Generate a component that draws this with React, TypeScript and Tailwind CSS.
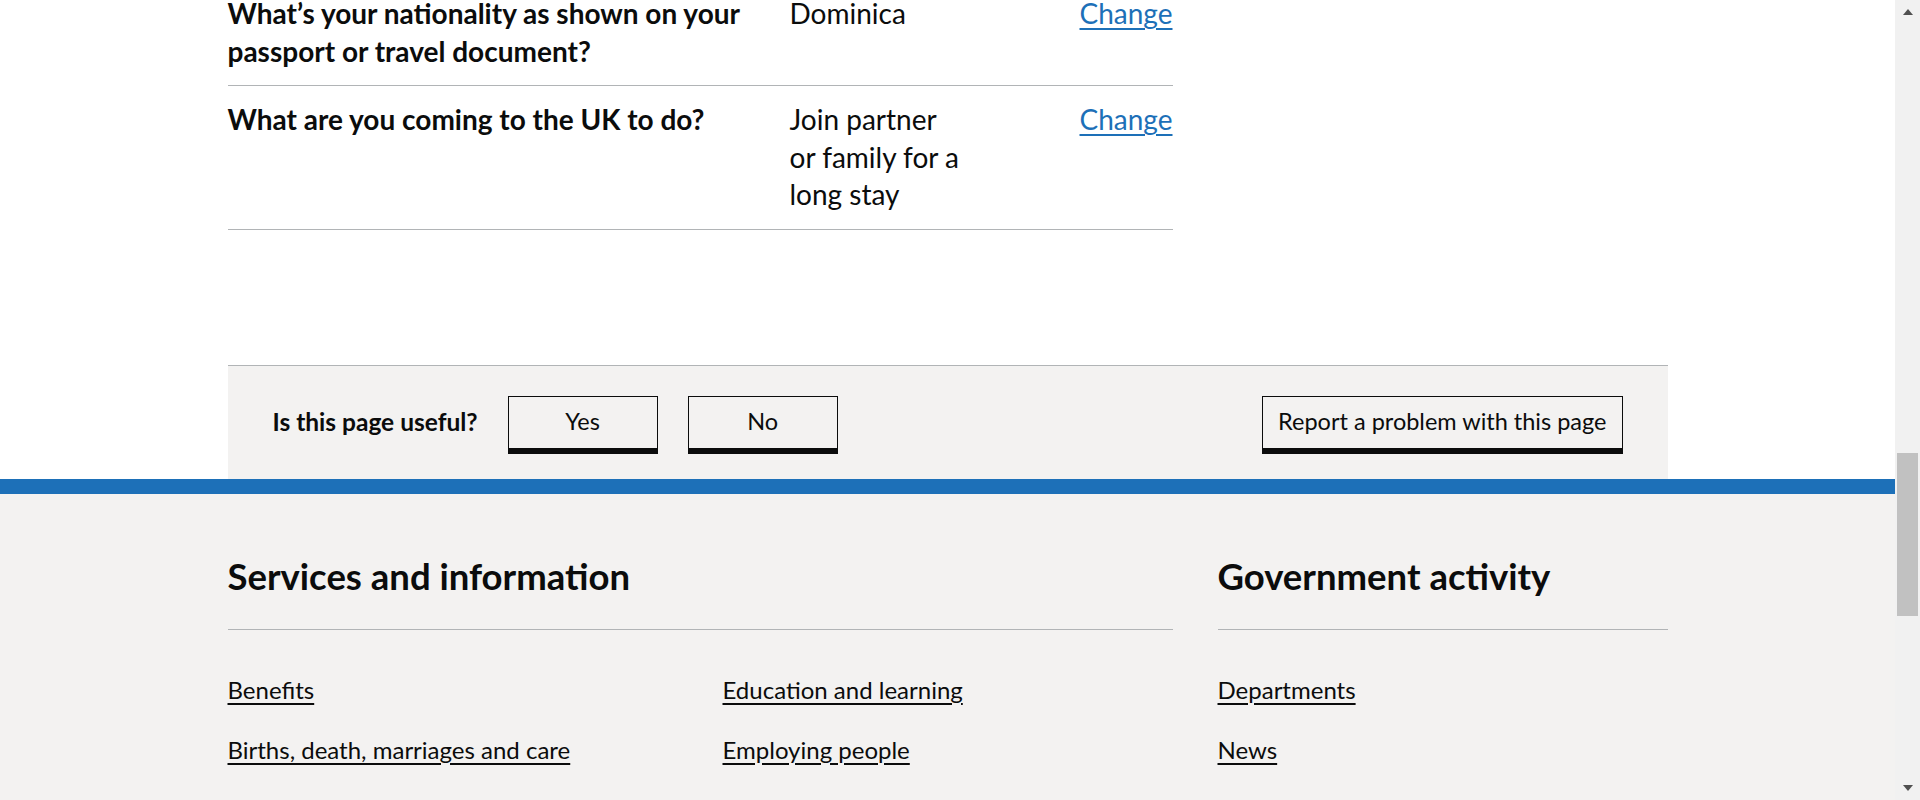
import { ReactNode } from 'react'

const font = "font-['Lato','Noto_Sans',sans-serif]"

type Row = {
  question: string
  answer: ReactNode
}

const rows: Row[] = [
  { question: 'What’s your nationality as shown on your passport or travel document?', answer: 'Dominica' },
  { question: 'What are you coming to the UK to do?', answer: 'Join partner or family for a long stay' },
]

const serviceLinks = [
  'Benefits',
  'Education and learning',
  'Births, death, marriages and care',
  'Employing people',
]

const govLinks = ['Departments', 'News']

const SummaryList = () => (
  <div className="-mt-[20px] w-[945px]">
    {rows.map((row, i) => (
      <div key={i} className="flex border-b border-[#b1b4b6] text-[28px] leading-[37.5px] text-[#0b0c0c]">
        <div className="w-[562px] shrink-0 py-[15px] pr-[30px] font-bold">{row.question}</div>
        <div className="w-[172px] shrink-0 py-[15px]">{row.answer}</div>
        <div className="flex-1 py-[15px] text-right">
          <a href="#" className="text-[#1d70b8] underline decoration-[1.5px] underline-offset-[4px]">
            Change
          </a>
        </div>
      </div>
    ))}
  </div>
)

const FeedbackButton = ({ children, wide }: { children: ReactNode; wide?: boolean }) => (
  <button
    className={`h-[53px] border-[1.5px] border-[#0b0c0c] bg-[#f3f2f1] text-[23.5px] text-[#0b0c0c] shadow-[0_5px_0_#0b0c0c] ${
      wide ? 'px-[15px]' : 'w-[150px]'
    }`}
  >
    {children}
  </button>
)

const Feedback = () => (
  <div className="mt-[135px] flex h-[114px] w-[1440px] items-start border-t border-[#b1b4b6] bg-[#f3f2f1] px-[45px] pt-[30px]">
    <div className="flex h-[53px] items-center gap-[30px]">
      <span className="text-[24.5px] font-bold text-[#0b0c0c]">Is this page useful?</span>
      <FeedbackButton>Yes</FeedbackButton>
      <FeedbackButton>No</FeedbackButton>
    </div>
    <div className="ml-auto">
      <FeedbackButton wide>Report a problem with this page</FeedbackButton>
    </div>
  </div>
)

const FooterLink = ({ label }: { label: string }) => (
  <li>
    <a href="#" className="text-[24px] leading-[30px] text-[#0b0c0c] underline decoration-[1.5px] underline-offset-[4px]">
      {label}
    </a>
  </li>
)

const Footer = () => (
  <footer className="flex-1 border-t-[15px] border-[#1d70b8] bg-[#f3f2f1]">
    <div className="mx-auto flex w-[1440px] gap-[45px] pt-[60px]">
      <div className="w-[945px]">
        <h2 className="text-[36.5px] font-bold leading-[45px] text-[#0b0c0c]">Services and information</h2>
        <div className="mt-[30px] border-t border-[#b1b4b6]" />
        <ul className="mt-[45px] grid grid-cols-2 gap-x-[45px] gap-y-[30px]">
          {serviceLinks.map((l) => (
            <FooterLink key={l} label={l} />
          ))}
        </ul>
      </div>
      <div className="w-[450px]">
        <h2 className="text-[36.5px] font-bold leading-[45px] text-[#0b0c0c]">Government activity</h2>
        <div className="mt-[30px] border-t border-[#b1b4b6]" />
        <ul className="mt-[45px] flex flex-col gap-[30px]">
          {govLinks.map((l) => (
            <FooterLink key={l} label={l} />
          ))}
        </ul>
      </div>
    </div>
  </footer>
)

const Scrollbar = () => (
  <div className="flex w-[25px] shrink-0 flex-col items-center bg-[#f1f1f1]">
    <svg width="10" height="6" viewBox="0 0 10 6" className="mt-[9px]">
      <path d="M5 0 L10 6 L0 6 Z" fill="#505050" />
    </svg>
    <div className="mt-[438px] h-[163px] w-[21px] bg-[#c1c1c1]" />
    <svg width="10" height="6" viewBox="0 0 10 6" className="mt-auto mb-[9px]">
      <path d="M0 0 L10 0 L5 6 Z" fill="#505050" />
    </svg>
  </div>
)

export default function App() {
  return (
    <div className={`flex h-[800px] w-full overflow-hidden bg-white ${font}`}>
      <div className="flex flex-1 flex-col overflow-hidden">
        <div className="mx-auto w-[1440px]">
          <SummaryList />
          <Feedback />
        </div>
        <Footer />
      </div>
      <Scrollbar />
    </div>
  )
}
